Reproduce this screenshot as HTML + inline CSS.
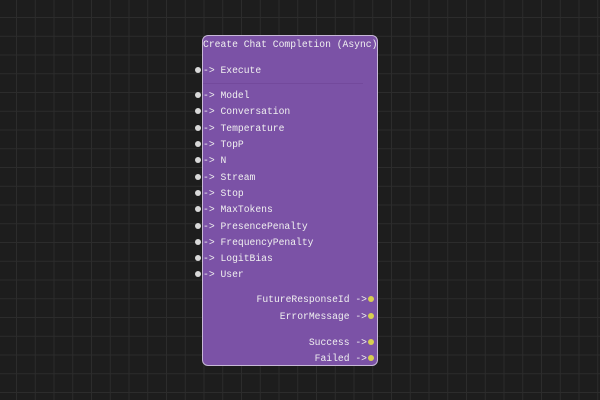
<!DOCTYPE html>
<html><head><style>
html,body{margin:0;padding:0;width:600px;height:400px;overflow:hidden;background:#1d1d1d;}
body{background-color:#1d1d1d;background-image:linear-gradient(to right,#2c2c2c 1px,transparent 1px),linear-gradient(to bottom,#2c2c2c 1px,transparent 1px);background-size:18.75px 18.75px;background-position:16px 17px;position:relative;font-family:"Liberation Mono",monospace;font-size:9.7px;color:#f0f0f0;}
.node{position:absolute;left:202px;top:35px;width:176px;height:331px;background:#7b52a6;border:1px solid #c8b8d8;border-radius:6px;box-sizing:border-box;}
.t{position:absolute;white-space:pre;line-height:10px;}
.d{position:absolute;width:6px;height:6px;border-radius:50%;background:#d8d8d8;}
.y{background:#d8d050;}
.sep{position:absolute;left:203px;top:83px;width:160px;height:1px;background:#73499c;}
</style></head><body>
<div class="node"></div>
<div class="sep"></div>
<div class="t" style="left:203px;top:40px">Create Chat Completion (Async)</div>

<div class="d" style="left:195px;top:67px"></div><div class="t" style="left:203px;top:66px">-> Execute</div>
<div class="d" style="left:195px;top:92px"></div><div class="t" style="left:203px;top:91px">-> Model</div>
<div class="d" style="left:195px;top:108px"></div><div class="t" style="left:203px;top:107px">-> Conversation</div>
<div class="d" style="left:195px;top:125px"></div><div class="t" style="left:203px;top:124px">-> Temperature</div>
<div class="d" style="left:195px;top:141px"></div><div class="t" style="left:203px;top:140px">-> TopP</div>
<div class="d" style="left:195px;top:157px"></div><div class="t" style="left:203px;top:156px">-> N</div>
<div class="d" style="left:195px;top:174px"></div><div class="t" style="left:203px;top:173px">-> Stream</div>
<div class="d" style="left:195px;top:190px"></div><div class="t" style="left:203px;top:189px">-> Stop</div>
<div class="d" style="left:195px;top:206px"></div><div class="t" style="left:203px;top:205px">-> MaxTokens</div>
<div class="d" style="left:195px;top:223px"></div><div class="t" style="left:203px;top:222px">-> PresencePenalty</div>
<div class="d" style="left:195px;top:239px"></div><div class="t" style="left:203px;top:238px">-> FrequencyPenalty</div>
<div class="d" style="left:195px;top:255px"></div><div class="t" style="left:203px;top:254px">-> LogitBias</div>
<div class="d" style="left:195px;top:271px"></div><div class="t" style="left:203px;top:270px">-> User</div>

<div class="t" style="right:233px;top:295px">FutureResponseId -></div><div class="d y" style="left:368px;top:296px"></div>
<div class="t" style="right:233px;top:312px">ErrorMessage -></div><div class="d y" style="left:368px;top:313px"></div>
<div class="t" style="right:233px;top:338px">Success -></div><div class="d y" style="left:368px;top:339px"></div>
<div class="t" style="right:233px;top:354px">Failed -></div><div class="d y" style="left:368px;top:355px"></div>
</body></html>
